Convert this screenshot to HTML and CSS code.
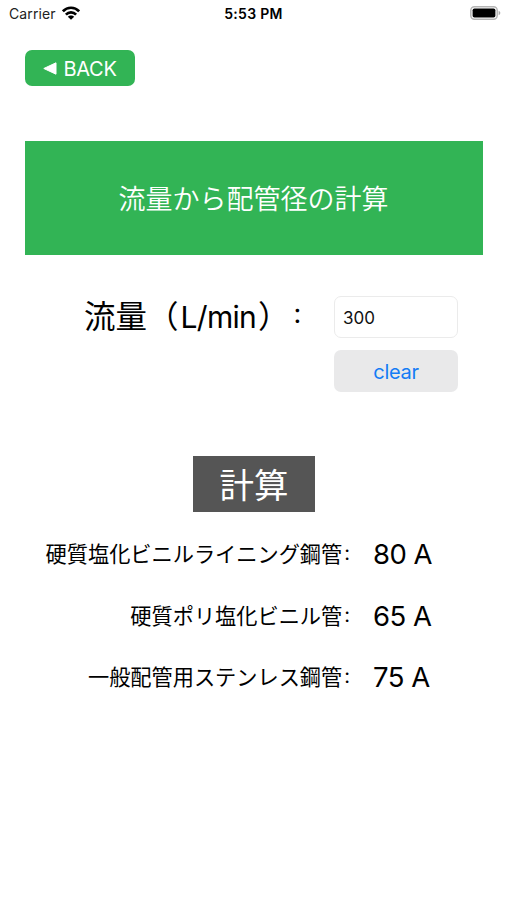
FILE: index.html
```html
<!DOCTYPE html>
<html lang="ja">
<head>
<meta charset="utf-8">
<title>配管径の計算</title>
<link rel="stylesheet" href="styles.css">
</head>
<body>
<header class="status">
  <div class="carrier"><span class="carrier-name">Carrier</span>
    <svg class="wifi" viewBox="0 0 18 14" width="18" height="14"><g fill="none" stroke="#000" stroke-width="2.6"><path d="M.9 5.3C5.4.6 12.6.6 17.1 5.3"/><path d="M3.9 8.6c2.8-3 7.4-3 10.2 0"/></g><path d="M9 13.8 5.8 10.7c1.7-1.7 4.7-1.7 6.4 0z"/></svg>
  </div>
  <div class="time">5:53 PM</div>
  <svg class="battery" viewBox="0 0 31 14" width="31" height="14"><rect x=".8" y=".8" width="26.4" height="12.4" rx="3.6" fill="#fff" stroke="#b5b5b5" stroke-width="1.5"/><rect x="2.6" y="2.5" width="22.8" height="9" rx="1.8"/><path d="M28.6 4.8c2.3.8 2.3 3.6 0 4.4z" fill="#aaa"/></svg>
</header>
<main>
  <button class="back"><svg viewBox="0 0 14 13" width="14" height="13"><path d="M.8 6.5 13 .8v11.4z" fill="#fff" stroke="#fff" stroke-linejoin="round"/></svg><span>BACK</span></button>
  <h1 class="title">流量から配管径の計算</h1>
  <section class="entry">
    <label class="flow" for="flow">流量（<span class="unit">L/min</span>）<span class="mark">:</span></label>
    <div class="controls">
      <input id="flow" class="field" value="300">
      <button class="clear">clear</button>
    </div>
  </section>
  <button class="calc">計算</button>
  <dl class="results">
    <dt>硬質塩化ビニルライニング鋼管<span class="colon">:</span></dt><dd>80 A</dd>
    <dt>硬質ポリ塩化ビニル管<span class="colon">:</span></dt><dd>65 A</dd>
    <dt>一般配管用ステンレス鋼管<span class="colon">:</span></dt><dd>75 A</dd>
  </dl>
</main>
</body>
</html>
```
FILE: styles.css
```css
* { box-sizing: border-box; }
body {
  margin: 0;
  background: #fff;
  color: #000;
  font-family: Inter, "Noto Sans CJK JP", sans-serif;
}
button, input { font: inherit; border: 0; margin: 0; padding: 0; }
.status {
  height: 28px;
  padding: 0 6px 0 9px;
  display: grid;
  grid-template-columns: 1fr auto 1fr;
  align-items: center;
  font-size: 14px;
}
.carrier { display: flex; align-items: center; gap: 6px; margin-top: -2px; color: #222; }
.carrier-name { letter-spacing: .1px; }
.wifi { margin-top: -1px; }
.time { font-weight: 600; font-size: 14px; letter-spacing: .3px; margin: -1px 3px 0 0; }
.battery { justify-self: end; margin-top: -2px; }
main { padding: 22px 25px 0; display: flex; flex-direction: column; }
.back {
  width: 110px;
  height: 36px;
  display: flex;
  align-items: center;
  justify-content: center;
  gap: 6px;
  border-radius: 7px;
  background: #32b455;
  color: #fff;
  font-size: 20px;
  letter-spacing: -.3px;
}
.back span { padding-top: 1px; }
.title {
  margin: 55px 0 0;
  width: 458px;
  height: 114px;
  padding: 0 1px 1px 0;
  display: flex;
  align-items: center;
  justify-content: center;
  background: #32b455;
  color: #fff;
  font-size: 27px;
  font-weight: 350;
}
.entry {
  margin-top: 41px;
  display: flex;
  justify-content: space-between;
  padding: 0 24px 0 59px;
}
.flow {
  height: 42px;
  line-height: 42px;
  font-size: 31.5px;
  white-space: nowrap;
}
.unit { margin: 0 2px; font-size: 30px; letter-spacing: -.7px; }
.mark {
  display: inline-block;
  margin-left: 4px;
  font-size: 27px;
  line-height: 27px;
  transform: translateY(-5px);
}
.controls { width: 124px; display: grid; gap: 12px; }
.field {
  width: 100%;
  height: 42px;
  padding: 1px 8px 0;
  border: 1px solid #ebebeb;
  border-radius: 7px;
  font-size: 17px;
  background: #fff;
  color: #111;
}
.clear {
  height: 42px;
  padding-top: 1px;
  border-radius: 7px;
  background: #e9e9ea;
  color: #147cf5;
  font-size: 20px;
  letter-spacing: -.3px;
}
.calc {
  align-self: flex-start;
  margin: 64px 0 0 168px;
  width: 122px;
  height: 56px;
  background: #555;
  color: #fff;
  font-size: 34.5px;
  line-height: 60px;
}
.results {
  margin: 12px 0 0;
  display: grid;
  grid-template-columns: 325px auto;
  grid-auto-rows: 61.5px;
  column-gap: 23px;
  line-height: 61px;
  white-space: nowrap;
}
dt { text-align: right; font-size: 21.2px; }
dd { margin: 0; font-size: 27.5px; letter-spacing: -.5px; }
.colon { display: inline-block; margin-left: 2px; font-size: 20px; line-height: 20px; transform: translateY(-2px); }
```
